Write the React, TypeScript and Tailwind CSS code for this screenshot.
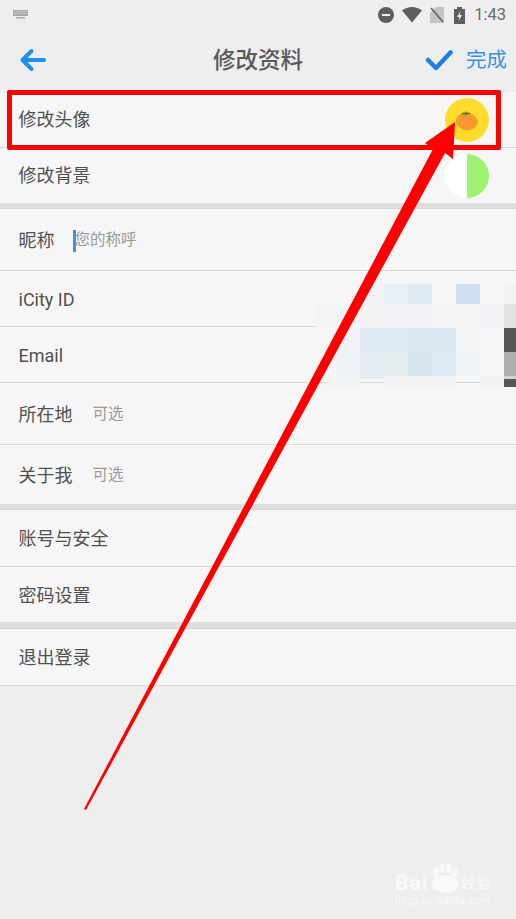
// Edit-profile screen with the red annotation, mosaic and watermark drawn over it.
const font = { fontFamily: 'Roboto, "Noto Sans CJK SC", sans-serif' };

type Row = { label: string; height: string; border?: boolean; hint?: string; caret?: boolean };

const groups: Row[][] = [
  [
    { label: '修改头像', height: 'h-[56px]', border: true },
    { label: '修改背景', height: 'h-[55px]' },
  ],
  [
    { label: '昵称', height: 'h-[62px]', border: true, hint: '您的称呼', caret: true },
    { label: 'iCity ID', height: 'h-[56px]', border: true },
    { label: 'Email', height: 'h-[56px]', border: true },
    { label: '所在地', height: 'h-[62px]', border: true, hint: '可选' },
    { label: '关于我', height: 'h-[59px]', hint: '可选' },
  ],
  [
    { label: '账号与安全', height: 'h-[57px]', border: true },
    { label: '密码设置', height: 'h-[55px]' },
  ],
  [{ label: '退出登录', height: 'h-[57px]', border: true }],
];

// mosaic cells: [x, y, w, h, colour]
const mosaic: [number, number, number, number, string][] = [
  [360, 284, 24, 20, '#f1f3f6'], [384, 284, 24, 20, '#e8eff6'], [408, 284, 24, 20, '#dfeaf3'], [456, 284, 24, 20, '#cfe1f0'], [480, 284, 24, 20, '#f5f6f8'], [504, 284, 12, 20, '#f2f2f2'],
  [316, 304, 20, 24, '#f4f4f4'], [336, 304, 24, 24, '#f3f4f6'], [360, 304, 24, 24, '#f3f3f3'], [384, 304, 24, 24, '#f0f2f5'], [408, 304, 24, 24, '#f0f2f5'], [432, 304, 24, 24, '#f4f4f4'], [456, 304, 24, 24, '#f5f5f7'], [480, 304, 24, 24, '#f0f2f6'], [504, 304, 12, 24, '#e3e3e3'],
  [336, 328, 24, 24, '#f1f3f7'], [360, 328, 24, 24, '#e0eaf3'], [384, 328, 24, 24, '#e0eaf3'], [408, 328, 24, 24, '#dee8f2'], [432, 328, 24, 24, '#dce8f1'], [456, 328, 24, 24, '#f3f4f5'], [504, 328, 12, 24, '#555555'],
  [336, 352, 24, 24, '#edf1f6'], [360, 352, 24, 24, '#e7edf5'], [384, 352, 24, 24, '#e5edf1'], [408, 352, 24, 24, '#d6e4f0'], [432, 352, 24, 24, '#e0eaf3'], [456, 352, 24, 24, '#eff2f6'], [504, 352, 12, 24, '#b0b0b0'],
  [326, 376, 34, 11, '#f3f3f3'], [360, 376, 24, 3, '#e7edf5'], [384, 376, 72, 11, '#f2f2f2'], [480, 376, 24, 11, '#f1f1f1'], [504, 376, 12, 3, '#d4d4d4'], [504, 379, 12, 8, '#555555'],
];

function StatusBar() {
  return (
    <div className="flex h-[28px] items-center pl-[13px] pr-[10px] pt-[2px]">
      <svg width="16" height="9" viewBox="0 0 16 9" className="mb-[1px]">
        <rect x="0" y="0" width="15" height="6" fill="#a8a8a8" />
        <path d="M1 1.5h13M1 3.5h13" stroke="#efedef" strokeWidth="0.7" strokeDasharray="1.4 1" />
        <rect x="3" y="7" width="9" height="1.5" fill="#a8a8a8" />
      </svg>
      <div className="ml-auto flex items-center">
        <svg width="16" height="16" viewBox="0 0 16 16">
          <circle cx="8" cy="8" r="8" fill="#5f5f5f" />
          <rect x="4" y="7" width="8" height="2" fill="#efedef" />
        </svg>
        <svg width="20" height="16" viewBox="0 0 20 16" className="ml-[8px]">
          <path d="M0 3.5C3 1.2 6.300 0 10 0s7 1.200 10 3.500L10 15.500z" fill="#5f5f5f" />
        </svg>
        <svg width="14" height="16" viewBox="0 0 14 16" className="ml-[8px]">
          <path d="M6 0h8v16H0V6z" fill="#c4c4c4" />
          <path d="M1 1l12 14" stroke="#5f5f5f" strokeWidth="1.500" />
        </svg>
        <svg width="11" height="17" viewBox="0 0 11 17" className="ml-[10px]">
          <path d="M3 0h5v2h3v15H0V2h3z" fill="#5f5f5f" />
          <path d="M6.500 4L3 10h2.300l-.8 4L8 8H5.700z" fill="#efedef" />
        </svg>
        <span className="ml-[9px] text-[16.500px] leading-none text-[#6a6a6a]">1:43</span>
      </div>
    </div>
  );
}

function Toolbar() {
  return (
    <div className="flex h-[64px] items-center">
      <div className="flex-1 basis-0">
        <svg width="28" height="24" viewBox="0 0 28 24" className="ml-[19px]">
          <path d="M25 12H4M12.500 3L3.500 12l9 9" fill="none" stroke="#1e8ff0" strokeWidth="4" strokeLinecap="round" strokeLinejoin="round" />
        </svg>
      </div>
      <div className="text-[22.500px] font-medium leading-none text-[#5a5a5a]">修改资料</div>
      <div className="flex flex-1 basis-0 items-center justify-end">
        <svg width="28" height="22" viewBox="0 0 28 22">
          <path d="M3 11l8 8L25.500 3.500" fill="none" stroke="#1e7fe0" strokeWidth="4.500" strokeLinecap="round" strokeLinejoin="round" />
        </svg>
        <span className="ml-[13px] mr-[9px] text-[20.500px] leading-none text-[#3b93e3]">完成</span>
      </div>
    </div>
  );
}

function Avatar() {
  return (
    <svg width="44" height="44" viewBox="0 0 44 44">
      <circle cx="22" cy="22" r="22" fill="#ffdb2e" />
      <ellipse cx="22.500" cy="24" rx="10.500" ry="8.500" fill="#f0a81c" />
      <ellipse cx="21" cy="23" rx="10" ry="8.500" fill="#fb962f" />
      <path d="M17 15.500h8M21 13.500v4" stroke="#3f7d1c" strokeWidth="1.300" />
      <path d="M16 22h.8M21 26h.8M25 21h.8M18 28h.8M26 26h.8" stroke="#dd7a20" strokeWidth="0.800" />
    </svg>
  );
}

function Background() {
  return (
    <svg width="44" height="44" viewBox="0 0 44 44">
      <circle cx="22" cy="22" r="22" fill="#ffffff" />
      <path d="M22 0a22 22 0 0 1 0 44z" fill="#9cf36f" />
    </svg>
  );
}

function Arrow() {
  return (
    <svg width="516" height="919" viewBox="0 0 516 919" className="pointer-events-none absolute left-0 top-0">
      <polygon points="84,809 433,149 425,143 455,122 453,159 445,153 86,810" fill="#ff0000" />
    </svg>
  );
}

function Watermark() {
  return (
    <div className="absolute left-[395px] top-[863px] w-[115px] text-[#fbfbfb] opacity-90">
      <div className="flex h-[30px] items-end">
        <span className="text-[21px] font-bold leading-[20px] tracking-[1px]">Bai</span>
        <svg width="32" height="30" viewBox="0 0 32 30" className="ml-[1px]">
          <ellipse cx="7" cy="10" rx="3" ry="5" fill="#fbfbfb" />
          <ellipse cx="13" cy="5" rx="3" ry="5" fill="#fbfbfb" />
          <ellipse cx="20" cy="5" rx="3" ry="5" fill="#fbfbfb" />
          <ellipse cx="26" cy="10" rx="3" ry="5" fill="#fbfbfb" />
          <ellipse cx="16" cy="21" rx="13" ry="9" fill="#fbfbfb" />
        </svg>
        <span className="text-[15px] leading-[20px]">经验</span>
      </div>
      <div className="mt-[2px] whitespace-nowrap text-[10px] leading-[12px] tracking-[0.9px]">jingyan.baidu.com</div>
    </div>
  );
}

export default function App() {
  return (
    <div className="relative h-[919px] w-[516px] overflow-hidden bg-[#efeeef]" style={font}>
      <StatusBar />
      <Toolbar />
      {groups.map((rows, g) => (
        <div key={g}>
          {g > 0 && <div className={`${g === 3 ? 'h-[7px]' : 'h-[6px]'} border-b border-[#d6d6d6] bg-[#dfdede]`} />}
          {rows.map((r) => (
            <div
              key={r.label}
              className={`flex items-center bg-[#f6f6f6] pl-[18.500px] ${g > 0 ? 'pt-[2px]' : ''} ${r.height} ${r.border ? 'border-b border-[#d8d8d8]' : ''}`}
            >
              <span className="text-[18px] leading-none text-[#505050]">{r.label}</span>
              {r.hint && (
                <span className={`flex items-center text-[15.500px] leading-none text-[#9a9a9a] ${r.caret ? 'ml-[18px]' : 'ml-[20px]'}`}>
                  {r.caret && <span className="mr-[-1px] h-[22px] w-[3px] bg-[#4a90d9]" />}
                  {r.hint}
                </span>
              )}
              {r.label === '修改头像' && (
                <div className="ml-auto mr-[27px]">
                  <Avatar />
                </div>
              )}
              {r.label === '修改背景' && (
                <div className="ml-auto mr-[27px]">
                  <Background />
                </div>
              )}
            </div>
          ))}
        </div>
      ))}

      {mosaic.map(([x, y, w, h, c]) => (
        <div key={`${x}-${y}`} className="absolute" style={{ left: x, top: y, width: w, height: h, background: c }} />
      ))}

      <div className="absolute left-[7px] top-[90px] h-[60px] w-[494px] rounded-[2px] border-[5px] border-[#ff0000]" />
      <Arrow />
      <Watermark />
    </div>
  );
}
